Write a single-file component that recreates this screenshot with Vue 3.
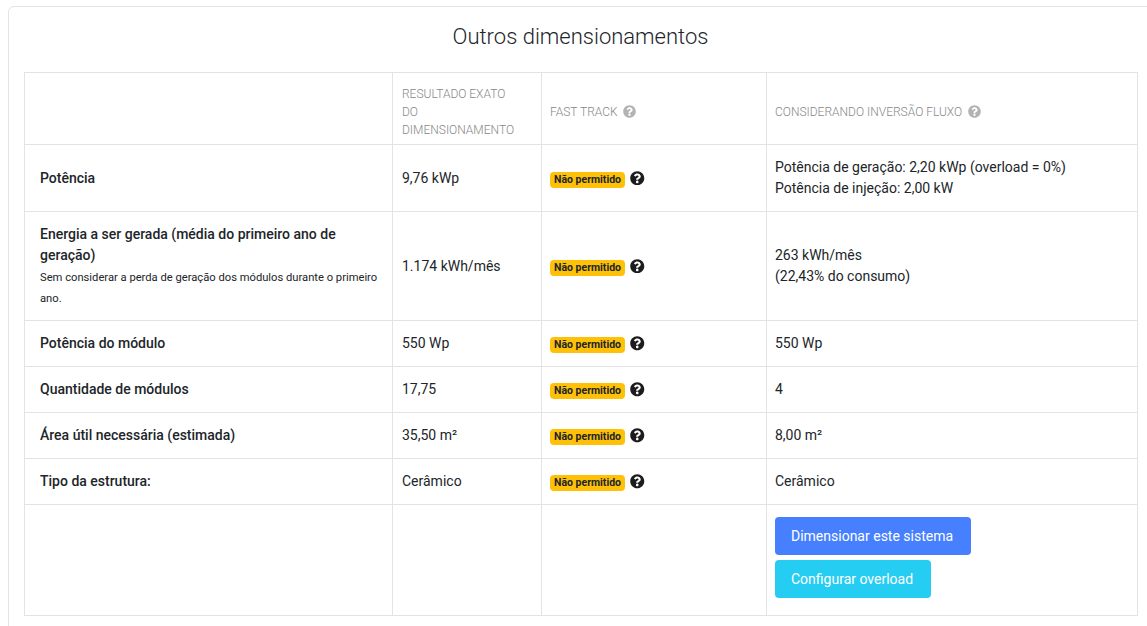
<script setup>
const q = "M504 256c0 136.997-111.043 248-248 248S8 392.997 8 256C8 119.083 119.043 8 256 8s248 111.083 248 248zM262.655 90c-54.497 0-89.255 22.957-116.549 63.758-3.536 5.286-2.353 12.415 2.715 16.258l34.699 26.31c5.205 3.947 12.621 3.008 16.665-2.122 17.864-22.658 30.113-35.797 57.303-35.797 20.429 0 45.698 13.148 45.698 32.958 0 14.976-12.363 22.667-32.534 33.976C247.128 238.528 216 254.941 216 296v4c0 6.627 5.373 12 12 12h56c6.627 0 12-5.373 12-12v-1.333c0-28.462 83.186-29.647 83.186-106.667 0-58.002-60.165-102-116.531-102zM256 338c-25.365 0-46 20.635-46 46 0 25.364 20.635 46 46 46s46-20.636 46-46c0-25.365-20.635-46-46-46z"
const rows = [
  { label: 'Potência', exact: '9,76 kWp', inv: ['Potência de geração: 2,20 kWp (overload = 0%)', 'Potência de injeção: 2,00 kW'] },
  { label: 'Energia a ser gerada (média do primeiro ano de geração)', note: 'Sem considerar a perda de geração dos módulos durante o primeiro ano.', exact: '1.174 kWh/mês', inv: ['263 kWh/mês', '(22,43% do consumo)'] },
  { label: 'Potência do módulo', exact: '550 Wp', inv: ['550 Wp'] },
  { label: 'Quantidade de módulos', exact: '17,75', inv: ['4'] },
  { label: 'Área útil necessária (estimada)', exact: '35,50 m²', inv: ['8,00 m²'] },
  { label: 'Tipo da estrutura:', exact: 'Cerâmico', inv: ['Cerâmico'] },
]
</script>

<template>
  <div class="page">
    <section class="card">
      <h2 class="title">Outros dimensionamentos</h2>
      <table class="grid">
        <colgroup>
          <col class="c1" /><col class="c2" /><col class="c3" /><col class="c4" />
        </colgroup>
        <thead>
          <tr>
            <th class="first"></th>
            <th>Resultado exato<br />do<br />dimensionamento</th>
            <th class="narrow">Fast Track
              <svg class="hint" viewBox="0 0 512 512"><path :d="q" /></svg>
            </th>
            <th class="narrow">Considerando inversão fluxo
              <svg class="hint" viewBox="0 0 512 512"><path :d="q" /></svg>
            </th>
          </tr>
        </thead>
        <tbody>
          <tr v-for="r in rows" :key="r.label">
            <td class="first" :class="{ tall: r.note }">
              <strong>{{ r.label }}</strong>
              <small v-if="r.note">{{ r.note }}</small>
            </td>
            <td>{{ r.exact }}</td>
            <td class="narrow">
              <span class="status">
                <span class="badge">Não permitido</span>
                <svg class="help" viewBox="0 0 512 512"><path :d="q" /></svg>
              </span>
            </td>
            <td class="narrow">
              <div v-for="l in r.inv" :key="l">{{ l }}</div>
            </td>
          </tr>
          <tr class="actions">
            <td></td>
            <td></td>
            <td></td>
            <td class="narrow">
              <button class="btn primary">Dimensionar este sistema</button>
              <button class="btn info">Configurar overload</button>
            </td>
          </tr>
        </tbody>
      </table>
    </section>
  </div>
</template>

<style>
html, body { margin: 0; overflow: hidden; background: #fff; }
</style>

<style scoped>
.page {
  height: 626px;
  overflow: hidden;
  padding: 6px 0 0 8px;
  box-sizing: border-box;
  font-family: Roboto, sans-serif;
  font-size: 14px;
  color: #212529;
}
.card {
  width: 1145px;
  box-sizing: border-box;
  border: 1px solid #e3e3e3;
  border-radius: 6px;
  padding: 0 15px 20px;
  background: #fff;
}
.title {
  margin: 0;
  padding-top: 15px;
  height: 65px;
  box-sizing: border-box;
  text-align: center;
  font-size: 22px;
  font-weight: 300;
  line-height: 30px;
  color: #212529;
}
.grid {
  width: 1113px;
  table-layout: fixed;
  border-collapse: collapse;
  border: 1px solid #e3e3e3;
}
.c1 { width: 368px; }
.c2 { width: 149px; }
.c3 { width: 225px; }
.c4 { width: 371px; }
th, td {
  border: 1px solid #e3e3e3;
  padding: 9px;
  text-align: left;
  line-height: 21px;
  vertical-align: middle;
  font-weight: 400;
  box-sizing: border-box;
}
th {
  font-size: 12px;
  line-height: 18px;
  font-weight: 300;
  text-transform: uppercase;
  color: #888;
  padding-top: 12px;
  padding-bottom: 5px;
}
th.narrow, td.narrow { padding-left: 8px; }
.first { padding-left: 15px; }
.tall { padding-top: 12px; padding-bottom: 11px; }
tbody tr { height: 46px; }
tbody tr:first-child { height: 67px; }
strong { display: block; font-weight: 500; }
small { display: block; font-size: 11.2px; line-height: 21px; margin-top: 1px; }
.status { display: flex; align-items: flex-start; gap: 5px; padding-top: 3px; }
.badge {
  background: #ffc107;
  color: #212529;
  font-size: 10.5px;
  font-weight: 700;
  line-height: 10px;
  padding: 3px 4px;
  border-radius: 4px;
}
.help { width: 14.5px; height: 14.5px; fill: #1c1c1f; margin-top: -1px; }
.hint { width: 13px; height: 13px; fill: #b3b3b3; margin-left: 2.5px; vertical-align: -1.5px; }
.actions td { padding-top: 12px; padding-bottom: 17px; }
.btn {
  display: block;
  height: 38px;
  border: 0;
  border-radius: 4px;
  padding: 0 18px 0 16px;
  font-family: inherit;
  font-size: 14px;
  color: #fff;
}
.primary { background: #4680ff; margin-bottom: 5px; }
.info { background: #25cdf2; }
</style>
